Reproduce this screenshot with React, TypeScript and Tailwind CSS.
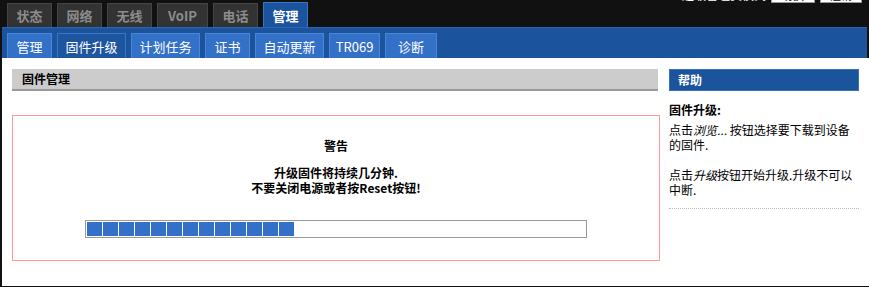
import React from 'react';

const topTabs = [
  { label: '状态', w: 'w-[45px]' },
  { label: '网络', w: 'w-[45px]' },
  { label: '无线', w: 'w-[45px]' },
  { label: 'VoIP', w: 'w-[51px]' },
  { label: '电话', w: 'w-[45px]' },
  { label: '管理', w: 'w-[45px]', active: true },
];

const subTabs = [
  { label: '管理', w: 'w-[45px]' },
  { label: '固件升级', w: 'w-[69px]', active: true },
  { label: '计划任务', w: 'w-[69px]' },
  { label: '证书', w: 'w-[45px]' },
  { label: '自动更新', w: 'w-[69px]' },
  { label: 'TR069', w: 'w-[51px]' },
  { label: '诊断', w: 'w-[52px]' },
];

const App: React.FC = () => {
  const blocks = Array.from({ length: 13 });

  return (
    <div className="w-[869px] h-[287px] overflow-hidden bg-[#111] font-['Noto_Sans_CJK_SC','Liberation_Sans',sans-serif] text-[12px] text-black">
      {/* top menu */}
      <div className="h-[27px] flex items-end pl-[7px]">
        <div className="flex items-end gap-[5px]">
          {topTabs.map((t) => (
            <div
              key={t.label}
              className={`${t.w} h-[24px] flex items-center justify-center border border-b-0 text-[13px] font-bold leading-none ${
                t.active
                  ? 'bg-[#1c539d] border-[#3a74c4] text-white h-[25px]'
                  : 'bg-[#333] border-[#444] text-[#8c8c8c]'
              }`}
            >
              {t.label}
            </div>
          ))}
        </div>
        <div className="ml-auto self-start -mt-[13px] mr-[7px] flex items-center gap-[5px]">
          <span className="text-[12px] text-white leading-[14px]">超级管理员模式</span>
          <span className="w-[44px] h-[16px] bg-white border border-[#999] text-[11px] leading-[14px] text-center">切换</span>
          <span className="w-[42px] h-[16px] bg-white border border-[#999] text-[11px] leading-[14px] text-center">注销</span>
        </div>
      </div>

      {/* sub menu */}
      <div className="mx-[2px] h-[31px] bg-[#1c539d] border-t border-[#2a64b5] flex items-end pl-[5px] gap-[5px]">
        {subTabs.map((t) => (
          <div
            key={t.label}
            className={`${t.w} h-[25px] flex items-center justify-center border border-b-0 text-[13px] text-white leading-none ${
              t.active ? 'bg-[#1e559f] border-[#3a74c4]' : 'bg-[#3370c8] border-[#4a85d6]'
            }`}
          >
            {t.label}
          </div>
        ))}
      </div>

      {/* content */}
      <div className="ml-[2px] h-[228px] bg-white flex pt-[11px]">
        <div className="ml-[10px] w-[648px]">
          <div className="w-[646px] h-[22px] bg-[#ccc] border-b-2 border-[#999] flex items-center pl-[10px] font-bold text-[12px]">
            固件管理
          </div>
          <div className="mt-[24px] h-[146px] border border-[#f99] flex flex-col items-center pt-[22px]">
            <div className="font-bold leading-[15px]">警告</div>
            <div className="mt-[12px] font-bold leading-[15px] text-center">
              升级固件将持续几分钟.
              <br />
              不要关闭电源或者按Reset按钮!
            </div>
            <div className="mt-[25px] w-[502px] h-[18px] border border-[#999] p-px flex gap-px">
              {blocks.map((_, i) => (
                <div key={i} className="w-[15px] h-full bg-[#3370c8]" />
              ))}
            </div>
          </div>
        </div>

        <div className="ml-[9px] w-[190px]">
          <div className="h-[22px] bg-[#1c539d] border border-[#3370c8] flex items-center pl-[8px] text-white font-bold">
            帮助
          </div>
          <div className="pt-[11px] pb-[11px] border-b border-dotted border-[#bbb] leading-[15px]">
            <div className="font-bold">固件升级:</div>
            <p className="mt-[5px]">
              点击<i>浏览...</i> 按钮选择要下载到设备的固件.
            </p>
            <p className="mt-[15px]">
              点击<i>升级</i>按钮开始升级.升级不可以中断.
            </p>
          </div>
        </div>
      </div>
    </div>
  );
};

export default App;
